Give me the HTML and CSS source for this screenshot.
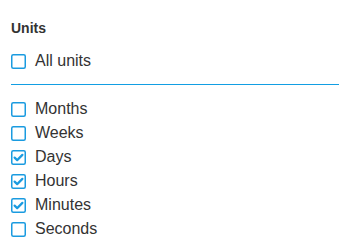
FILE: index.html
```html
<!DOCTYPE html>
<html>
<head>
<meta charset="utf-8">
<link rel="stylesheet" href="styles.css">
</head>
<body>
<div class="panel">
  <div class="title">Units</div>
  <label class="row"><svg class="box" viewBox="0 0 15 15" width="15" height="15"><rect x="0.75" y="0.75" width="13.5" height="13.5" rx="1.5"/></svg><span class="label">All units</span></label>
  <div class="sep"></div>
  <label class="row"><svg class="box" viewBox="0 0 15 15" width="15" height="15"><rect x="0.75" y="0.75" width="13.5" height="13.5" rx="1.5"/></svg><span class="label">Months</span></label>
  <label class="row"><svg class="box" viewBox="0 0 15 15" width="15" height="15"><rect x="0.75" y="0.75" width="13.5" height="13.5" rx="1.5"/></svg><span class="label">Weeks</span></label>
  <label class="row"><svg class="box" viewBox="0 0 15 15" width="15" height="15"><rect x="0.75" y="0.75" width="13.5" height="13.5" rx="1.5"/><path class="tick" d="M3.6 7.6 L6.2 10.1 L11.4 4.9"/></svg><span class="label">Days</span></label>
  <label class="row"><svg class="box" viewBox="0 0 15 15" width="15" height="15"><rect x="0.75" y="0.75" width="13.5" height="13.5" rx="1.5"/><path class="tick" d="M3.6 7.6 L6.2 10.1 L11.4 4.9"/></svg><span class="label">Hours</span></label>
  <label class="row"><svg class="box" viewBox="0 0 15 15" width="15" height="15"><rect x="0.75" y="0.75" width="13.5" height="13.5" rx="1.5"/><path class="tick" d="M3.6 7.6 L6.2 10.1 L11.4 4.9"/></svg><span class="label">Minutes</span></label>
  <label class="row"><svg class="box" viewBox="0 0 15 15" width="15" height="15"><rect x="0.75" y="0.75" width="13.5" height="13.5" rx="1.5"/></svg><span class="label">Seconds</span></label>
</div>
</body>
</html>
```
FILE: styles.css
```css
html, body {
  margin: 0;
  padding: 0;
  background: #fff;
}
.panel {
  padding: 18px 12px 0 11px;
  font-family: "Liberation Sans", Arial, sans-serif;
  color: #333;
}
.title {
  font-weight: bold;
  font-size: 14px;
  line-height: 20px;
  margin-bottom: 11px;
}
.row {
  display: flex;
  align-items: center;
  height: 24px;
  gap: 9px;
}
.box {
  display: block;
  flex: none;
}
.box rect {
  fill: #fff;
  stroke: #1a9be0;
  stroke-width: 1.5;
}
.box .tick {
  fill: none;
  stroke: #1a9be0;
  stroke-width: 2.2;
  stroke-linecap: round;
  stroke-linejoin: round;
}
.label {
  font-size: 16px;
  line-height: 24px;
}
.sep {
  height: 0;
  border-top: 1px solid #129ee3;
  margin: 11px 0 12px 0;
}
```
